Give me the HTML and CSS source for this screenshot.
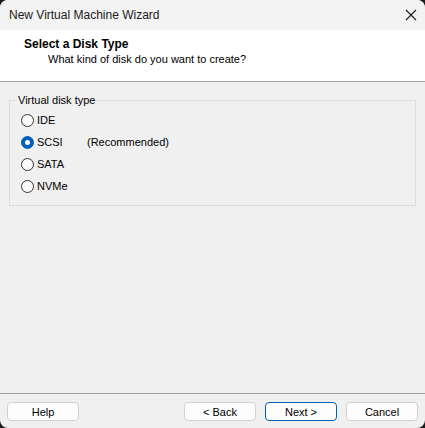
FILE: index.html
```html
<!DOCTYPE html>
<html>
<head>
<meta charset="utf-8">
<link rel="stylesheet" href="styles.css">
</head>
<body>
<div class="window">
  <div class="titlebar">
    <span class="title">New Virtual Machine Wizard</span>
    <svg class="close" width="12" height="12" viewBox="0 0 12 12"><path d="M1 1 L11 11 M11 1 L1 11" stroke="#1a1a1a" stroke-width="1.1" fill="none"/></svg>
  </div>
  <div class="header">
    <div class="h-title">Select a Disk Type</div>
    <div class="h-sub">What kind of disk do you want to create?</div>
  </div>
  <div class="content">
    <fieldset class="group">
      <legend>Virtual disk type</legend>
      <div class="row"><span class="radio"></span><span class="label">IDE</span></div>
      <div class="row"><span class="radio checked"></span><span class="label w">SCSI</span><span class="note">(Recommended)</span></div>
      <div class="row"><span class="radio"></span><span class="label">SATA</span></div>
      <div class="row"><span class="radio"></span><span class="label">NVMe</span></div>
    </fieldset>
  </div>
  <div class="footer">
    <button class="btn">Help</button>
    <div class="spacer"></div>
    <button class="btn">&lt; Back</button>
    <button class="btn primary">Next &gt;</button>
    <button class="btn">Cancel</button>
  </div>
</div>
</body>
</html>
```
FILE: styles.css
```css
html, body {
  margin: 0;
  padding: 0;
  background: #1c1c1c;
}
body {
  font-family: "Liberation Sans", Arial, sans-serif;
  font-size: 11px;
  color: #000;
}
.window {
  width: 425px;
  height: 428px;
  background: #f0f0f0;
  border-radius: 8px;
  overflow: hidden;
  display: flex;
  flex-direction: column;
}
.titlebar {
  height: 30px;
  flex: none;
  display: flex;
  align-items: center;
  justify-content: space-between;
  padding: 0 8px 0 9px;
  background: #f3f3f3;
  box-sizing: border-box;
}
.title {
  font-size: 12px;
  color: #1a1a1a;
}
.header {
  height: 52px;
  flex: none;
  background: #ffffff;
  border-bottom: 1px solid #a0a0a0;
  box-sizing: border-box;
}
.h-title {
  font-weight: bold;
  font-size: 12px;
  margin: 7px 0 0 24px;
  line-height: 15px;
}
.h-sub {
  margin: 0 0 0 48px;
  line-height: 15px;
}
.content {
  flex: 1;
  padding: 10px 9px 0 9px;
}
.group {
  margin: 0;
  padding: 1px 0 8px 11px;
  border: 1px solid #dcdcdc;
  min-width: 0;
}
.group legend {
  padding: 0 1px;
  margin-left: -4px;
  line-height: 16px;
  color: #000;
}
.row {
  display: flex;
  align-items: center;
  height: 22px;
}
.radio {
  width: 11px;
  height: 11px;
  border: 1px solid #333;
  border-radius: 50%;
  background: #fbfbfb;
  margin-right: 3px;
  box-sizing: content-box;
  position: relative;
}
.radio.checked {
  background: #005fb8;
  border-color: #005fb8;
}
.radio.checked::after {
  content: "";
  position: absolute;
  left: 3px;
  top: 3px;
  width: 5px;
  height: 5px;
  border-radius: 50%;
  background: #fff;
}
.label.w {
  width: 50px;
}
.footer {
  height: 35px;
  flex: none;
  border-top: 1px solid #a0a0a0;
  display: flex;
  align-items: flex-start;
  padding: 8px 7px 0 7px;
  gap: 9px;
  box-sizing: border-box;
}
.spacer {
  flex: 1;
}
.btn {
  width: 72px;
  height: 19px;
  margin: 0;
  padding: 0;
  font-family: inherit;
  font-size: 11px;
  line-height: 16px;
  color: #000;
  background: #fdfdfd;
  border: 1px solid #d0d0d0;
  border-radius: 4px;
}
.btn.primary {
  border-color: #005fb8;
}
```
